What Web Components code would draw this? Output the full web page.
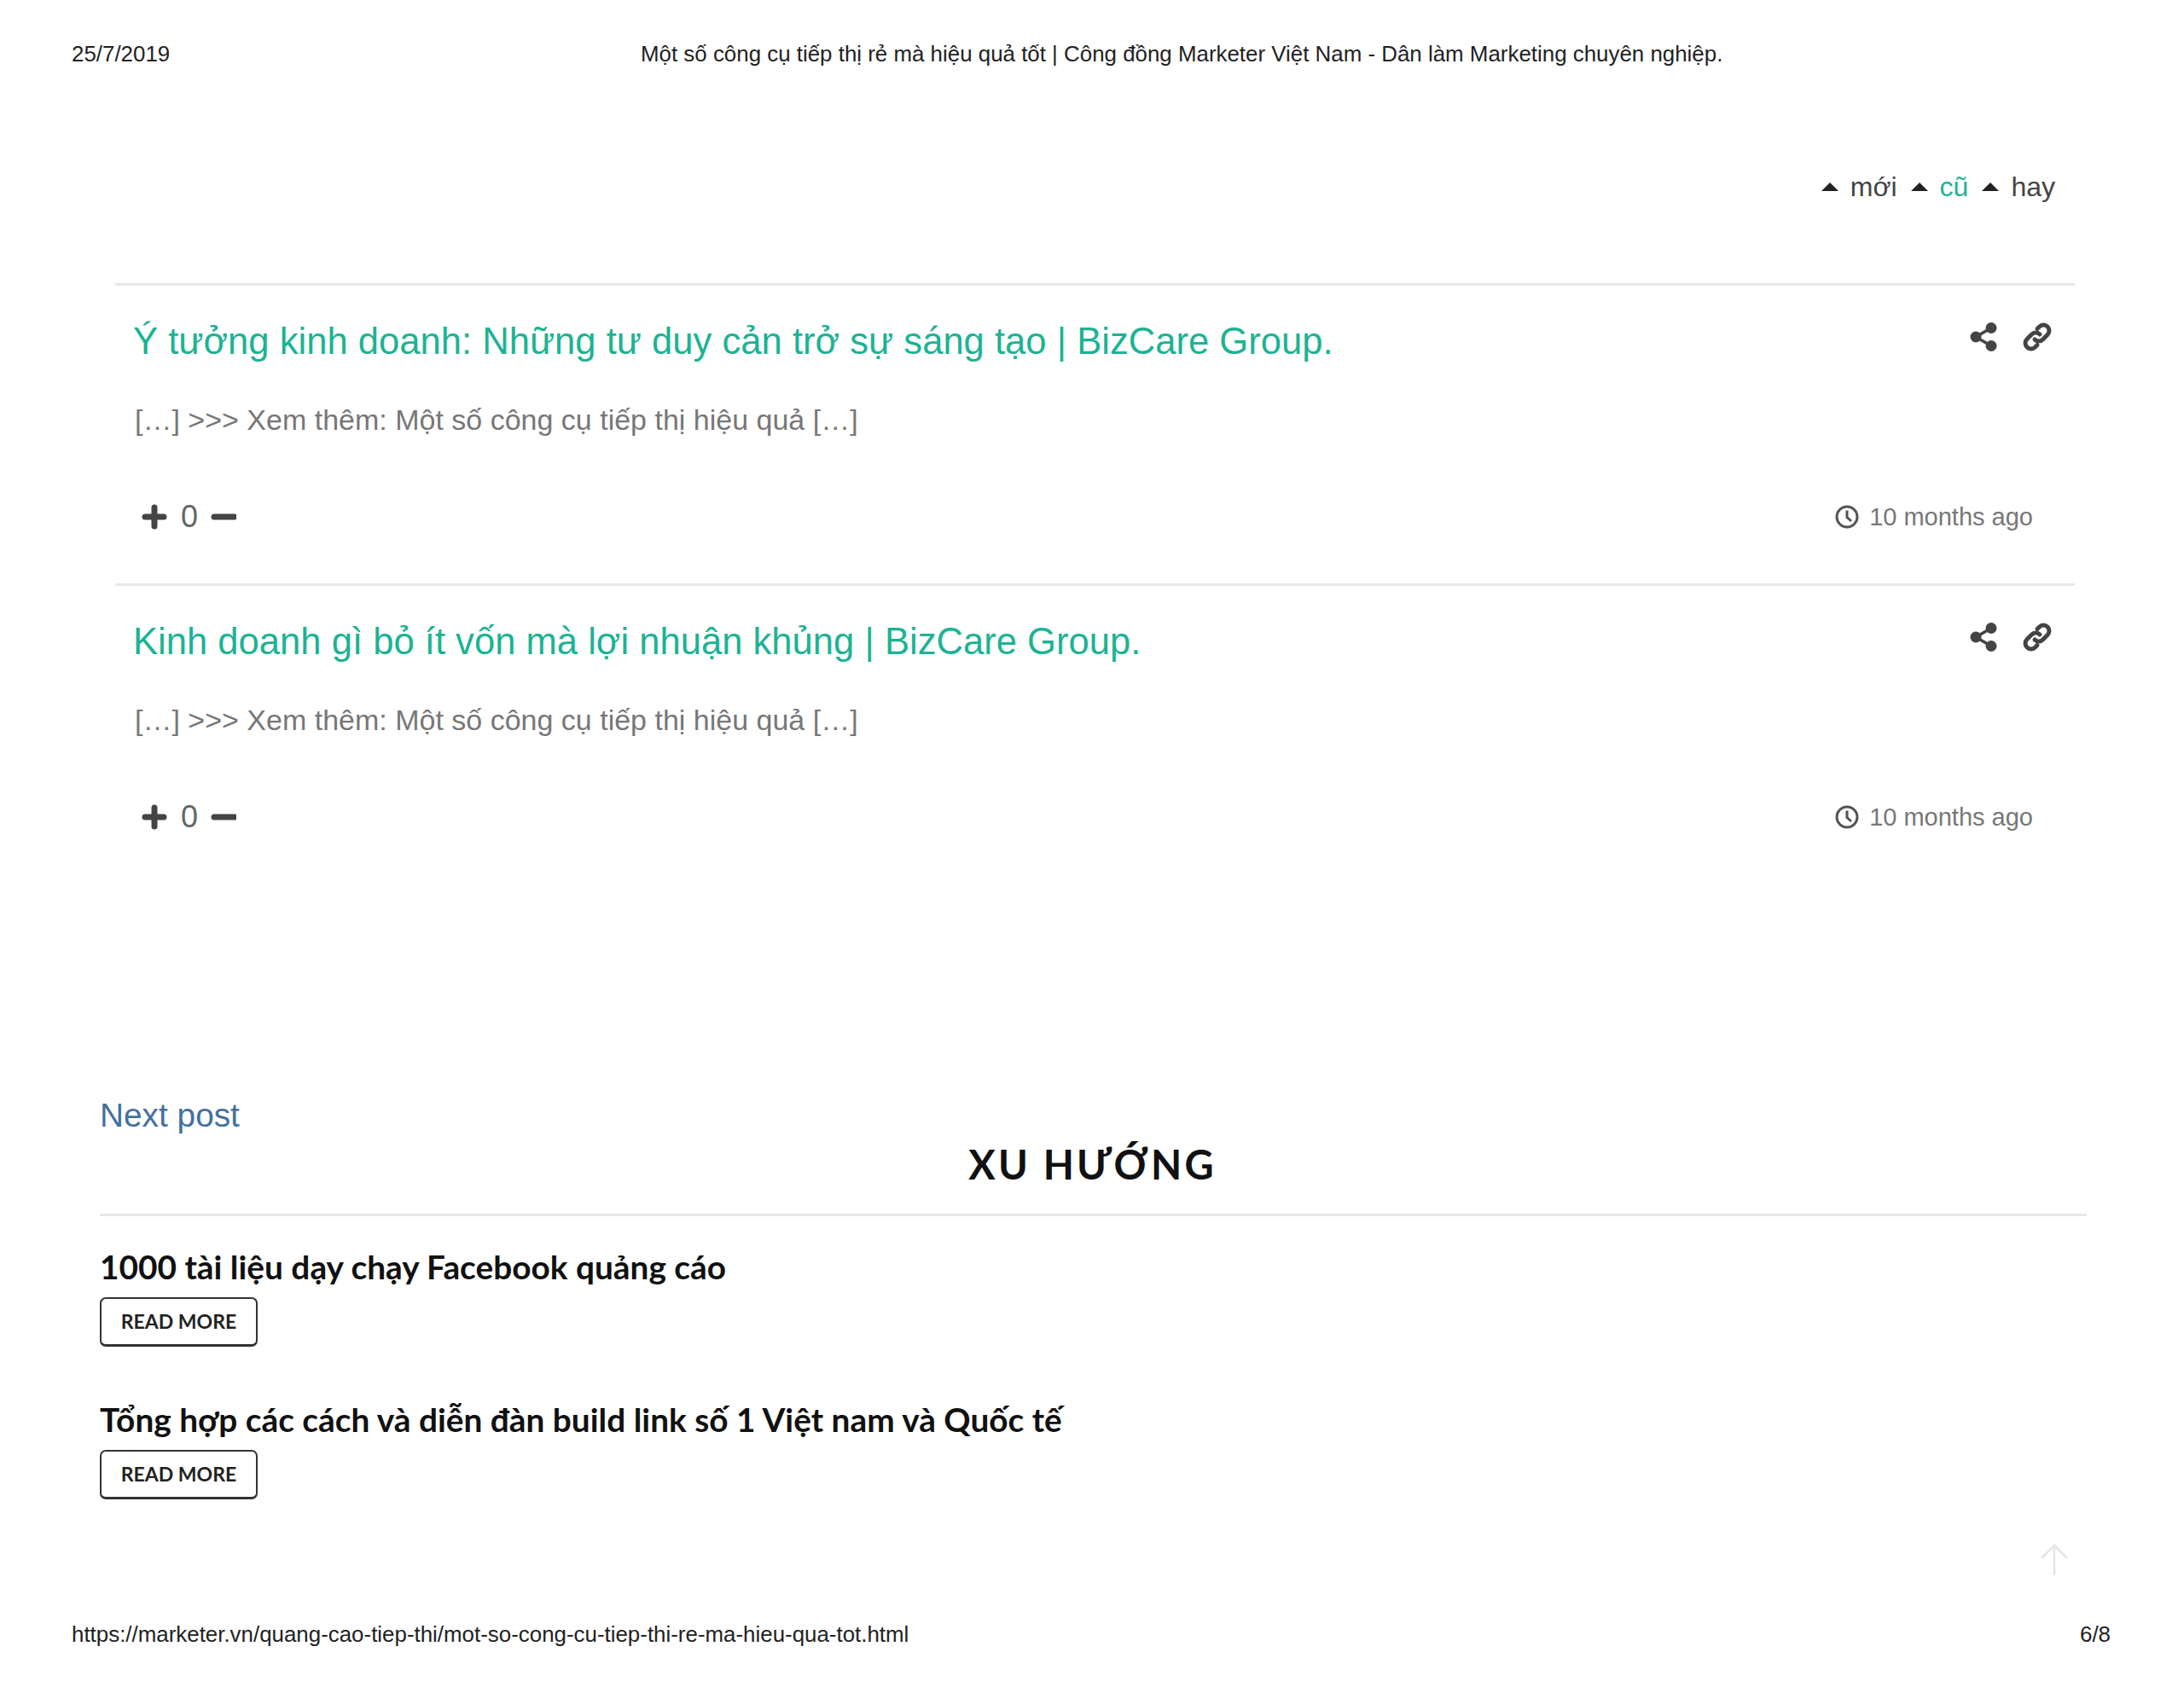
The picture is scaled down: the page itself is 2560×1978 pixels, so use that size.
<!DOCTYPE html>
<html lang="vi">
<head>
<meta charset="utf-8">
<title>Một số công cụ tiếp thị rẻ mà hiệu quả tốt</title>
<style>
  html, body { margin: 0; background: #fff; }
  body { width: 2560px; height: 1978px; overflow: hidden; position: relative; font-family: "Liberation Sans", sans-serif; }
</style>
</head>
<body>
<print-bar top>
  <span>25/7/2019</span>
  <span slot="center">Một số công cụ tiếp thị rẻ mà hiệu quả tốt | Công đồng Marketer Việt Nam - Dân làm Marketing chuyên nghiệp.</span>
</print-bar>

<sort-tabs></sort-tabs>

<comment-list>
  <comment-card title="Ý tưởng kinh doanh: Những tư duy cản trở sự sáng tạo | BizCare Group.">[…] &gt;&gt;&gt; Xem thêm: Một số công cụ tiếp thị hiệu quả […]</comment-card>
  <comment-card title="Kinh doanh gì bỏ ít vốn mà lợi nhuận khủng | BizCare Group.">[…] &gt;&gt;&gt; Xem thêm: Một số công cụ tiếp thị hiệu quả […]</comment-card>
</comment-list>

<trend-section>
  <trend-item title="1000 tài liệu dạy chạy Facebook quảng cáo"></trend-item>
  <trend-item title="Tổng hợp các cách và diễn đàn build link số 1 Việt nam và Quốc tế"></trend-item>
</trend-section>

<scroll-top></scroll-top>

<print-bar>
  <span>https://marketer.vn/quang-cao-tiep-thi/mot-so-cong-cu-tiep-thi-re-ma-hieu-qua-tot.html</span>
  <span slot="right">6/8</span>
</print-bar>

<script>
class PrintBar extends HTMLElement {
  constructor() {
    super();
    this.attachShadow({ mode: "open" });
    this.shadowRoot.innerHTML = `
    <style>
      :host {
        display: grid;
        grid-template-columns: 667px auto 1fr;
        align-items: center;
        height: 30px;
        padding: 48px 86px 0 84px;
        font-size: 25.9px;
        color: #222;
      }
      :host(:not([top])) {
        position: absolute;
        left: 0;
        right: 0;
        top: 1853px;
      }
      .right { text-align: right; grid-column: 3; }
      .left, .center { white-space: nowrap; }
    </style>
    <div class="left"><slot></slot></div>
    <div class="center"><slot name="center"></slot></div>
    <div class="right"><slot name="right"></slot></div>`;
  }
}

class SortTabs extends HTMLElement {
  constructor() {
    super();
    this.attachShadow({ mode: "open" });
    const arrow = `<svg width="22" height="12" viewBox="0 0 22 12"><path d="M11 1 21 11H1z" fill="#222"/></svg>`;
    this.shadowRoot.innerHTML = `
    <style>
      :host {
        display: flex;
        justify-content: flex-end;
        align-items: center;
        height: 40px;
        margin-top: 121px;
        padding-right: 151px;
        font-size: 32px;
        color: #444;
      }
      svg { margin-right: 13px; }
      span { margin-right: 15px; }
      span:last-child { margin-right: 0; }
      .on { color: #1cb394; }
    </style>
    ${arrow}<span>mới</span>${arrow}<span class="on">cũ</span>${arrow}<span>hay</span>`;
  }
}

class CommentList extends HTMLElement {
  constructor() {
    super();
    this.attachShadow({ mode: "open" });
    this.shadowRoot.innerHTML = `
    <style>
      :host {
        display: block;
        margin: 93px 128px 0 135px;
      }
    </style>
    <slot></slot>`;
  }
}

class CommentCard extends HTMLElement {
  constructor() {
    super();
    this.attachShadow({ mode: "open" });
    const title = this.getAttribute("title");
    this.shadowRoot.innerHTML = `
    <style>
      :host {
        display: block;
        height: 349px;
        border-top: 3px solid #e8e8e8;
        color: #777;
      }
      .head {
        display: flex;
        justify-content: space-between;
        padding: 38px 27px 0 21px;
        height: 58px;
      }
      h3 {
        margin: 0;
        font-weight: 400;
        font-size: 43.6px;
        line-height: 54px;
        color: #1cb394;
        white-space: nowrap;
      }
      .tools { display: flex; gap: 30px; align-items: flex-start; margin-top: 5px; }
      .body {
        margin: 41px 0 0 23px;
        font-size: 34px;
        line-height: 40px;
      }
      .foot {
        display: flex;
        justify-content: space-between;
        align-items: center;
        margin-top: 74px;
        padding: 0 49px 0 31px;
        height: 40px;
      }
      .vote { display: flex; align-items: center; font-size: 36px; color: #666; }
      .vote span { margin: 0 15px 0 16px; }
      .time { display: flex; align-items: center; gap: 12px; font-size: 29px; color: #777; }
    </style>
    <div class="head">
      <h3>${title}</h3>
      <div class="tools">
        <svg width="32" height="34" viewBox="0 0 32 34"><g fill="#444"><circle cx="7" cy="17" r="6.5"/><circle cx="25" cy="6.5" r="6.5"/><circle cx="25" cy="27.5" r="6.5"/></g><path d="M25 6.5 7 17 25 27.5" fill="none" stroke="#444" stroke-width="3.6"/></svg>
        <svg width="34" height="34" viewBox="0 0 34 34" fill="none" stroke="#444" stroke-width="5" stroke-linecap="round"><path d="M14 20a6.5 6.5 0 0 0 9.5 0l5.500-5.500a6.700 6.700 0 0 0-9.500-9.500l-2.500 2.500"/><path d="M20 14a6.500 6.500 0 0 0-9.500 0l-5.500 5.500a6.700 6.700 0 0 0 9.500 9.500l2.500-2.500"/></svg>
      </div>
    </div>
    <div class="body"><slot></slot></div>
    <div class="foot">
      <div class="vote">
        <svg width="30" height="30" viewBox="0 0 30 30"><path d="M15 4v22M4 15h22" stroke="#444" stroke-width="7" stroke-linecap="round"/></svg>
        <span>0</span>
        <svg width="30" height="30" viewBox="0 0 30 30"><path d="M4 15h24" stroke="#444" stroke-width="7" stroke-linecap="round"/></svg>
      </div>
      <div class="time">
        <svg width="28" height="28" viewBox="0 0 28 28" fill="none" stroke="#555" stroke-width="3"><circle cx="14" cy="14" r="12"/><path d="M14 6.5V14.500L19 19"/></svg>
        <span>10 months ago</span>
      </div>
    </div>`;
  }
}

class TrendSection extends HTMLElement {
  constructor() {
    super();
    this.attachShadow({ mode: "open" });
    this.shadowRoot.innerHTML = `
    <style>
      :host {
        display: block;
        margin: 0 114px 0 117px;
        padding-top: 249px;
      }
      a {
        display: block;
        font-size: 38.8px;
        line-height: 46px;
        color: #44709f;
        margin-bottom: 10px;
      }
      h2 {
        margin: 0;
        height: 85px;
        line-height: 46px;
        padding-top: 4px;
        box-sizing: border-box;
        text-align: center;
        font-family: Lato, sans-serif;
        font-size: 47px;
        font-weight: 700;
        letter-spacing: 3.2px;
        color: #111;
        border-bottom: 3px solid #e8e8e8;
      }
      h2 span { position: relative; left: -1px; top: -3px; }
    </style>
    <a>Next post</a>
    <h2><span>XU HƯỚNG</span></h2>
    <slot></slot>`;
  }
}

class TrendItem extends HTMLElement {
  constructor() {
    super();
    this.attachShadow({ mode: "open" });
    const title = this.getAttribute("title");
    this.shadowRoot.innerHTML = `
    <style>
      :host {
        display: block;
        padding-top: 36px;
        height: 143px;
        font-family: Lato, sans-serif;
        color: #111;
      }
      h4 {
        margin: 0;
        font-size: 38.8px;
        line-height: 46px;
        font-weight: 700;
        white-space: nowrap;
      }
      .btn {
        box-sizing: border-box;
        width: 185px;
        height: 58px;
        margin-top: 13px;
        padding-bottom: 2px;
        display: flex;
        align-items: center;
        justify-content: center;
        border: 2px solid #333;
        border-bottom-width: 3px;
        border-radius: 7px;
        font-size: 23px;
        font-weight: 700;
        color: #222;
      }
    </style>
    <h4>${title}</h4>
    <div class="btn">READ MORE</div>`;
  }
}

class ScrollTop extends HTMLElement {
  constructor() {
    super();
    this.attachShadow({ mode: "open" });
    this.shadowRoot.innerHTML = `
    <style>
      :host { position: absolute; left: 2390px; top: 1810px; width: 36px; height: 38px; display: block; }
    </style>
    <svg width="36" height="38" viewBox="0 0 36 38" fill="none" stroke="#e6e6e6" stroke-width="2.5"><path d="M18 2V37M3 17 18 2 33 17"/></svg>`;
  }
}

customElements.define("print-bar", PrintBar);
customElements.define("sort-tabs", SortTabs);
customElements.define("comment-list", CommentList);
customElements.define("comment-card", CommentCard);
customElements.define("trend-section", TrendSection);
customElements.define("trend-item", TrendItem);
customElements.define("scroll-top", ScrollTop);
</script>
</body>
</html>
